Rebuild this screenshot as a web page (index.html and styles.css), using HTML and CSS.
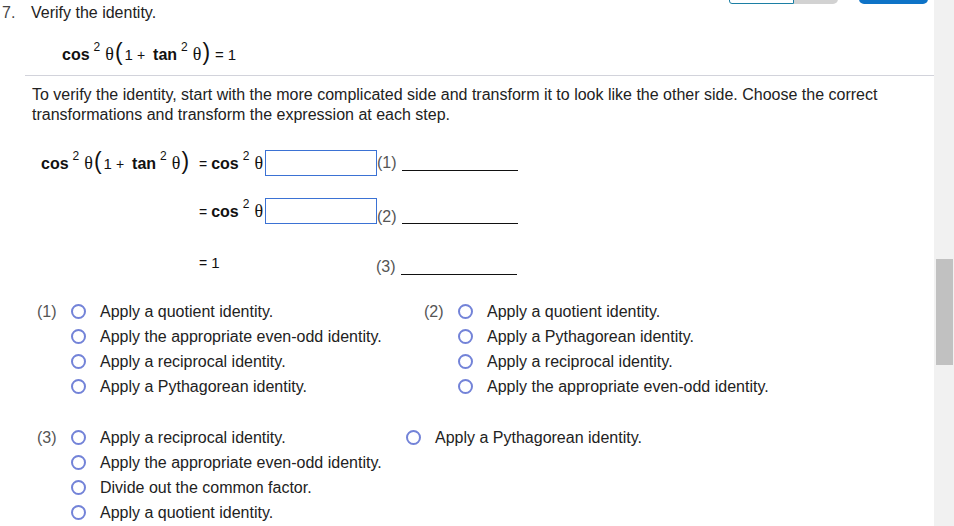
FILE: index.html
```html
<!DOCTYPE html>
<html lang="en">
<head>
<meta charset="utf-8">
<title>Verify the identity</title>
<link rel="stylesheet" href="styles.css">
</head>
<body>
<div class="page">
  <div class="main">
    <div class="toolbar">
      <div class="tb-input"></div><div class="tb-gray"></div><div class="tb-blue"></div>
    </div>
    <div class="qhead"><span class="qnum">7.</span><span class="qtitle">Verify the identity.</span></div>
    <div class="given math"><span class="fn">cos</span><span class="sup">2</span><span class="th">θ</span><span class="par pl">(</span><span class="num">1</span><span class="op">+</span><span class="fn">tan</span><span class="sup">2</span><span class="th">θ</span><span class="par pr">)</span><span class="eq">=</span><span class="num n1">1</span></div>
    <div class="rule"></div>
    <p class="instr">To verify the identity, start with the more complicated side and transform it to look like the other side. Choose the correct transformations and transform the expression at each step.</p>

    <div class="steps">
      <div class="step s1">
        <div class="lhs math"><span class="fn">cos</span><span class="sup">2</span><span class="th">θ</span><span class="par pl">(</span><span class="num">1</span><span class="op">+</span><span class="fn">tan</span><span class="sup">2</span><span class="th">θ</span><span class="par pr">)</span></div>
        <div class="rhs"><div class="expr math"><span class="eq2">=</span><span class="fn">cos</span><span class="sup">2</span><span class="th">θ</span></div><span class="box"></span></div>
        <div class="reason"><span class="rlabel">(1)</span><span class="rline"></span></div>
      </div>
      <div class="step s2">
        <div class="lhs math"></div>
        <div class="rhs"><div class="expr math"><span class="eq2">=</span><span class="fn">cos</span><span class="sup">2</span><span class="th">θ</span></div><span class="box"></span></div>
        <div class="reason r2"><span class="rlabel">(2)</span><span class="rline"></span></div>
      </div>
      <div class="step s3">
        <div class="lhs math"></div>
        <div class="rhs"><div class="expr math"><span class="eq2">=</span><span class="num">1</span></div></div>
        <div class="reason r3"><span class="rlabel">(3)</span><span class="rline"></span></div>
      </div>
    </div>

    <div class="choices">
      <div class="qrow">
        <div class="group g1">
          <span class="glabel">(1)</span>
          <div class="col">
            <label class="opt"><input type="radio" name="c1" class="radio"><span>Apply a quotient identity.</span></label>
            <label class="opt"><input type="radio" name="c1" class="radio"><span>Apply the appropriate even-odd identity.</span></label>
            <label class="opt"><input type="radio" name="c1" class="radio"><span>Apply a reciprocal identity.</span></label>
            <label class="opt"><input type="radio" name="c1" class="radio"><span>Apply a Pythagorean identity.</span></label>
          </div>
        </div>
        <div class="group g2">
          <span class="glabel">(2)</span>
          <div class="col">
            <label class="opt"><input type="radio" name="c2" class="radio"><span>Apply a quotient identity.</span></label>
            <label class="opt"><input type="radio" name="c2" class="radio"><span>Apply a Pythagorean identity.</span></label>
            <label class="opt"><input type="radio" name="c2" class="radio"><span>Apply a reciprocal identity.</span></label>
            <label class="opt"><input type="radio" name="c2" class="radio"><span>Apply the appropriate even-odd identity.</span></label>
          </div>
        </div>
      </div>
      <div class="qrow q3">
        <div class="group g3">
          <span class="glabel">(3)</span>
          <div class="col c31">
            <label class="opt"><input type="radio" name="c3" class="radio"><span>Apply a reciprocal identity.</span></label>
            <label class="opt"><input type="radio" name="c3" class="radio"><span>Apply the appropriate even-odd identity.</span></label>
            <label class="opt"><input type="radio" name="c3" class="radio"><span>Divide out the common factor.</span></label>
            <label class="opt"><input type="radio" name="c3" class="radio"><span>Apply a quotient identity.</span></label>
          </div>
          <div class="col">
            <label class="opt"><input type="radio" name="c3" class="radio"><span>Apply a Pythagorean identity.</span></label>
          </div>
        </div>
      </div>
    </div>
  </div>
  <div class="scrollbar"><div class="thumb"></div></div>
</div>
</body>
</html>
```

FILE: styles.css
```css
* { box-sizing: border-box; }
html, body { margin: 0; padding: 0; }
body {
  width: 954px;
  height: 526px;
  overflow: hidden;
  background: #fff;
  font-family: "Liberation Sans", Arial, sans-serif;
  font-size: 16px;
  color: #222;
}
.page { display: flex; height: 526px; }
.main { width: 934px; flex: none; }

/* scrollbar */
.scrollbar { width: 20px; flex: none; background: #f1f1f1; padding: 259px 1px 0 2px; }
.thumb { height: 106px; background: #c1c1c1; }

/* top toolbar (mostly scrolled off) */
.toolbar { height: 4px; display: flex; align-items: flex-end; overflow: hidden; padding-left: 729px; }
.tb-input { width: 65px; height: 10px; border: 1px solid #1c7fa4; border-radius: 0 0 0 3px; background: #fff; }
.tb-gray { width: 44px; height: 10px; background: #d2d2d2; border-radius: 0 0 5px 0; }
.tb-blue { width: 69px; height: 10px; margin-left: 21px; margin-bottom: 0.5px; background: #0e73c7; border-radius: 0 0 5px 5px; }

/* header */
.qhead { display: flex; height: 18px; line-height: 18px; }
.qnum { width: 31px; padding-left: 2px; color: #444; }
.qtitle { color: #222; }

/* math */
.math { line-height: 30px; white-space: nowrap; color: #111; }
.math span { line-height: 1; }
.fn { font-weight: bold; font-size: 16px; }
.sup { font-size: 12px; vertical-align: 9px; margin: 0 5px 0 4px; }
.th { font-family: "Liberation Serif", "Times New Roman", serif; font-size: 18px; }
.par { font-size: 23px; font-weight: normal; }
.pl { margin: 0 2px 0 1px; }
.pr { margin: 0 0 0 1px; }
.num { font-size: 15px; }
.op { font-size: 14px; margin: 0 8px 0 4px; }
.eq { font-size: 15px; margin: 0 4px 0 5px; }
.eq2 { font-size: 14px; margin-right: 4px; }

.given { height: 30px; margin-top: 18px; padding-left: 62px; }
.rule { height: 1px; margin: 5px 0 0 25px; background: #d2d3db; }
.instr { margin: 9px 0 0 0; padding-left: 32px; padding-right: 20px; line-height: 20px; color: #222; }

/* steps */
.steps { margin-top: 25px; padding-left: 41px; }
.step { display: flex; align-items: flex-start; height: 26px; }
.step .math { line-height: 26px; height: 26px; }
.s2 { margin-top: 22px; }
.s3 { margin-top: 26px; }
.lhs { width: 158px; flex: none; }
.rhs { width: 178px; flex: none; display: flex; align-items: flex-start; }
.expr { display: block; }
.box {
  display: block;
  width: 112px;
  height: 26px;
  margin-left: auto;
  border: 1px solid #3b72d4;
  background: #fff;
}
.reason { line-height: 26px; white-space: nowrap; }
.r2 { margin-top: 6px; }
.r2 .rline { vertical-align: -2px; }
.r3 { margin-top: 4px; margin-left: -1px; }
.rlabel { color: #555; }
.rline { display: inline-block; width: 116px; height: 1px; background: #111; margin-left: 5px; vertical-align: -3px; }

/* choices */
.choices { margin-top: 23px; padding-left: 37px; }
.qrow { display: flex; }
.q3 { margin-top: 26px; }
.group { display: flex; align-items: flex-start; }
.g1 { width: 387px; }
.glabel { width: 34px; flex: none; line-height: 25px; color: #555; }
.col { display: flex; flex-direction: column; }
.c31 { width: 335px; }
.opt { display: flex; align-items: flex-start; height: 25px; line-height: 25px; color: #222; white-space: nowrap; }
.radio {
  -webkit-appearance: none;
  appearance: none;
  width: 15px;
  height: 15px;
  margin: 5px 14px 0 0;
  padding: 0;
  border: 2px solid #7383d8;
  border-radius: 50%;
  background: #fff;
  flex: none;
}
```
